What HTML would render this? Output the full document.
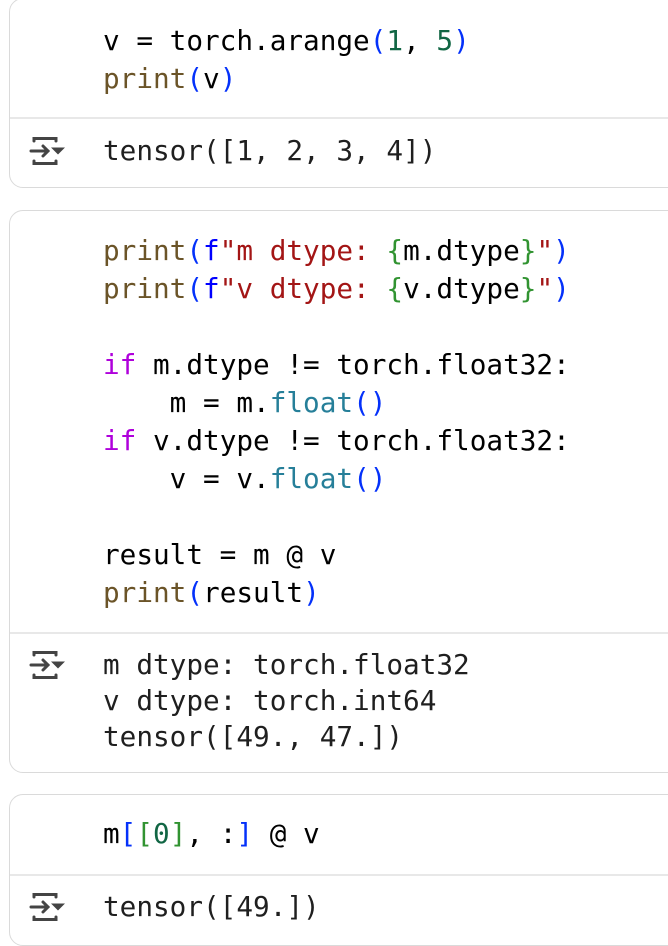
<!DOCTYPE html>
<html><head><style>
body{margin:0;width:668px;height:946px;background:#fff;position:relative;overflow:hidden;font-family:"DejaVu Sans Mono",monospace;}
.cell{position:absolute;left:9px;width:680px;border:1.5px solid #dadada;border-radius:14px;box-sizing:border-box;}
.div{position:absolute;left:10px;width:670px;height:1.5px;background:#e8e8e8;}
.l{position:absolute;left:103px;font-size:27.7px;line-height:38px;height:38px;white-space:pre;color:#000;}
.o{color:#1f1f1f;}
.p{color:#6b5428}.b{color:#0431fa}.n{color:#116644}.s{color:#a31515}.k{color:#0000ff}.g{color:#319331}.kw{color:#af00db}.f{color:#267f99}
.ic{position:absolute;left:29px;width:38px;height:30px;}
</style></head><body>
<div class="cell" style="top:-2px;height:190px"></div>
<div class="div" style="top:117px"></div>
<div class="cell" style="top:210px;height:563px"></div>
<div class="div" style="top:632px"></div>
<div class="cell" style="top:794px;height:152px"></div>
<div class="div" style="top:874px"></div>

<div class="l" style="top:22px">v = torch.arange<span class="b">(</span><span class="n">1</span>, <span class="n">5</span><span class="b">)</span></div>
<div class="l" style="top:60px"><span class="p">print</span><span class="b">(</span>v<span class="b">)</span></div>
<div class="l o" style="top:132px">tensor([1, 2, 3, 4])</div>

<div class="l" style="top:232px"><span class="p">print</span><span class="b">(</span><span class="k">f</span><span class="s">"m dtype: </span><span class="g">{</span>m.dtype<span class="g">}</span><span class="s">"</span><span class="b">)</span></div>
<div class="l" style="top:270px"><span class="p">print</span><span class="b">(</span><span class="k">f</span><span class="s">"v dtype: </span><span class="g">{</span>v.dtype<span class="g">}</span><span class="s">"</span><span class="b">)</span></div>
<div class="l" style="top:346px"><span class="kw">if</span> m.dtype != torch.float32:</div>
<div class="l" style="top:384px">    m = m.<span class="f">float</span><span class="b">()</span></div>
<div class="l" style="top:422px"><span class="kw">if</span> v.dtype != torch.float32:</div>
<div class="l" style="top:460px">    v = v.<span class="f">float</span><span class="b">()</span></div>
<div class="l" style="top:536px">result = m @ v</div>
<div class="l" style="top:574px"><span class="p">print</span><span class="b">(</span>result<span class="b">)</span></div>
<div class="l o" style="top:646px">m dtype: torch.float32</div>
<div class="l o" style="top:682px">v dtype: torch.int64</div>
<div class="l o" style="top:718px">tensor([49., 47.])</div>

<div class="l" style="top:815px">m<span class="b">[</span><span class="g">[</span><span class="n">0</span><span class="g">]</span>, :<span class="b">]</span> @ v</div>
<div class="l o" style="top:888px">tensor([49.])</div>

<svg class="ic" style="top:136px" viewBox="0 0 38 30"><g fill="none" stroke="#444" stroke-width="3" stroke-linecap="round"><path d="M5 5V2.5H27V5"/><path d="M5 25V27.5H27V25"/><path d="M2 15H19M14 10L19 15L14 20"/></g><path d="M22 11.5H36L29 18.5Z" fill="#444"/></svg>
<svg class="ic" style="top:650px" viewBox="0 0 38 30"><g fill="none" stroke="#444" stroke-width="3" stroke-linecap="round"><path d="M5 5V2.5H27V5"/><path d="M5 25V27.5H27V25"/><path d="M2 15H19M14 10L19 15L14 20"/></g><path d="M22 11.5H36L29 18.5Z" fill="#444"/></svg>
<svg class="ic" style="top:892px" viewBox="0 0 38 30"><g fill="none" stroke="#444" stroke-width="3" stroke-linecap="round"><path d="M5 5V2.5H27V5"/><path d="M5 25V27.5H27V25"/><path d="M2 15H19M14 10L19 15L14 20"/></g><path d="M22 11.5H36L29 18.5Z" fill="#444"/></svg>
</body></html>
